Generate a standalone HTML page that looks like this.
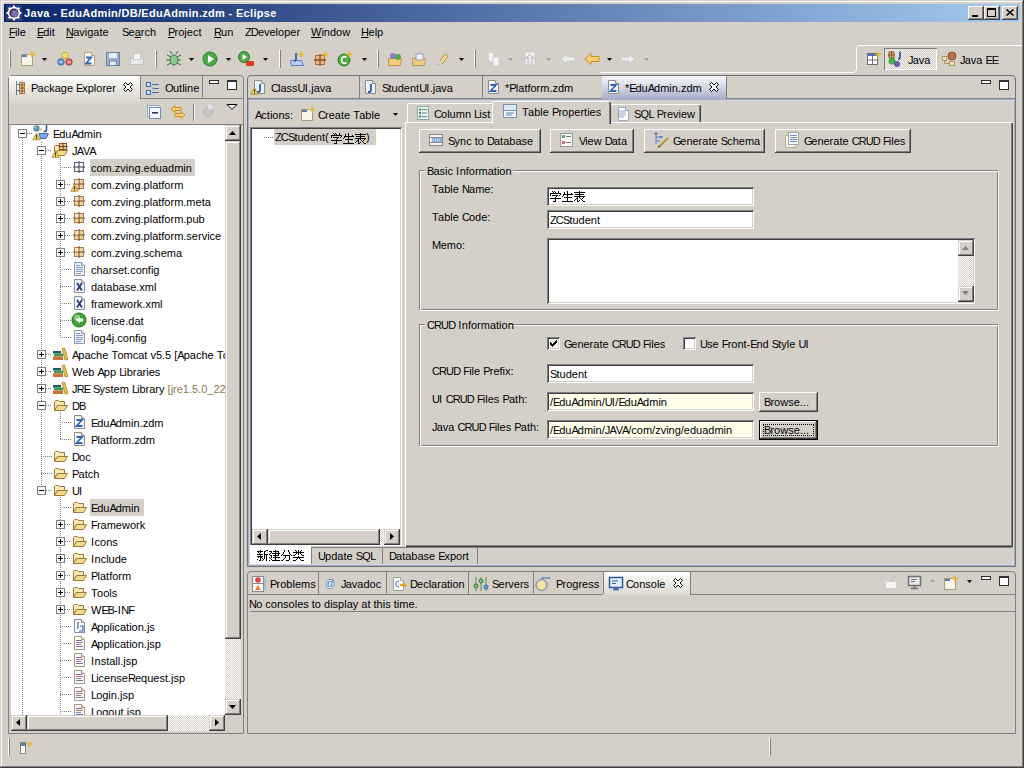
<!DOCTYPE html><html><head><meta charset="utf-8"><style>
html,body{margin:0;padding:0;width:1024px;height:768px;overflow:hidden;}
body{position:relative;font-family:"Liberation Sans",sans-serif;font-size:11px;color:#000;}
.t{position:absolute;white-space:nowrap;font-size:11px;line-height:13px;font-family:"Liberation Sans",sans-serif;}
svg{overflow:visible}
i{font-style:normal}.km13{letter-spacing:-1.3px}.km12{letter-spacing:-1.2px}.km10{letter-spacing:-1.0px}.km9{letter-spacing:-0.9px}.km8{letter-spacing:-0.8px}.km7{letter-spacing:-0.7px}.km6{letter-spacing:-0.6px}.km5{letter-spacing:-0.5px}.km4{letter-spacing:-0.4px}.k5{letter-spacing:0.5px}
</style></head><body><div style="position:absolute;left:0px;top:0px;width:1024px;height:768px;background:#D4D0C8"></div><div style="position:absolute;left:1px;top:1px;width:1021px;height:1px;background:#FFFFFF"></div><div style="position:absolute;left:1px;top:1px;width:1px;height:765px;background:#FFFFFF"></div><div style="position:absolute;left:1022px;top:1px;width:1px;height:765px;background:#808080"></div><div style="position:absolute;left:1px;top:766px;width:1022px;height:1px;background:#808080"></div><div style="position:absolute;left:1023px;top:0px;width:1px;height:768px;background:#404040"></div><div style="position:absolute;left:0px;top:767px;width:1024px;height:1px;background:#404040"></div><div style="position:absolute;left:4px;top:4px;width:1016px;height:18px;background:linear-gradient(to right,#0A246A,#A6CAF0)"></div><svg style="position:absolute;left:6px;top:5px" width="16" height="16" viewBox="0 0 16 16"><rect x="0" y="0" width="16" height="16" fill="#3A4488" opacity="0.7"/><g fill="#fff"><circle cx="8" cy="8" r="6.2"/><rect x="7" y="0.5" width="2" height="15"/><rect x="0.5" y="7" width="15" height="2"/><rect x="7" y="0.5" width="2" height="15" transform="rotate(45 8 8)"/><rect x="7" y="0.5" width="2" height="15" transform="rotate(-45 8 8)"/></g><circle cx="8" cy="8" r="4.6" fill="#2A2640"/><circle cx="8.5" cy="8.5" r="3.4" fill="#7A70A8"/></svg><div class="t" style="left:24px;top:7px;color:#fff;font-weight:bold;letter-spacing:0.32px;">Java - EduAdmin/DB/EduAdmin.zdm - Eclipse</div><div style="position:absolute;left:968px;top:6px;width:16px;height:14px;background:#D4D0C8;box-shadow:inset -1px -1px #404040,inset 1px 1px #FFFFFF,inset -2px -2px #808080;"></div><div style="position:absolute;left:972px;top:15px;width:6px;height:2px;background:#000"></div><div style="position:absolute;left:984px;top:6px;width:16px;height:14px;background:#D4D0C8;box-shadow:inset -1px -1px #404040,inset 1px 1px #FFFFFF,inset -2px -2px #808080;"></div><div style="position:absolute;left:987px;top:8px;width:9px;height:9px;border:1px solid #000;border-top-width:2px;box-sizing:border-box"></div><div style="position:absolute;left:1002px;top:6px;width:16px;height:14px;background:#D4D0C8;box-shadow:inset -1px -1px #404040,inset 1px 1px #FFFFFF,inset -2px -2px #808080;"></div><svg style="position:absolute;left:1006px;top:9px" width="8" height="7"><path d="M0.5 0.5 L7.5 6.5 M7.5 0.5 L0.5 6.5" stroke="#000" stroke-width="1.6"/></svg><div class="t" style="left:9px;top:26px;"><u><i class="km8">F</i></u>ile</div><div class="t" style="left:37px;top:26px;"><u><i class="km12">E</i></u>dit</div><div class="t" style="left:66px;top:26px;"><u><i class="km8">N</i></u>avigate</div><div class="t" style="left:122px;top:26px;"><i class="km8">S</i>e<u>a</u>rch</div><div class="t" style="left:168px;top:26px;"><u><i class="km8">P</i></u>roject</div><div class="t" style="left:214px;top:26px;"><u><i class="km9">R</i></u>un</div><div class="t" style="left:245px;top:26px;"><i class="km9">Z</i><i class="km9">D</i>eveloper</div><div class="t" style="left:311px;top:26px;"><u>W</u>indow</div><div class="t" style="left:361px;top:26px;"><u><i class="km4">H</i></u>elp</div><div style="position:absolute;left:9px;top:50px;width:1px;height:18px;background:#FFFFFF"></div><div style="position:absolute;left:10px;top:50px;width:1px;height:18px;background:#808080"></div><svg style="position:absolute;left:20px;top:51px" width="16" height="16" viewBox="0 0 16 16" ><rect x="1.5" y="3.5" width="11" height="11" fill="#F8F6EA" stroke="#A89C70"/><rect x="2" y="4" width="5" height="2" fill="#5A7EC0"/><path d="M12 0.5 V6.5 M9 3.5 H15" stroke="#E8B820" stroke-width="1.5"/></svg><svg style="position:absolute;left:42px;top:58px" width="5" height="3"><path d="M0 0 H5 L2.5 3 Z" fill="#000"/></svg><svg style="position:absolute;left:57px;top:51px" width="16" height="16" viewBox="0 0 16 16" ><circle cx="8" cy="4.5" r="3.2" fill="#F4E36A" stroke="#B8A840"/><circle cx="4" cy="11" r="3.2" fill="#6A9AD8" stroke="#3A6AB0"/><circle cx="12" cy="11" r="3.2" fill="#E86A6A" stroke="#B03A3A"/><rect x="2.5" y="10.5" width="3" height="1" fill="#fff"/><rect x="10.5" y="10.5" width="3" height="1" fill="#fff"/></svg><svg style="position:absolute;left:81px;top:51px" width="16" height="16" viewBox="0 0 16 16" ><path d="M3.5 1.5 H10.5 L13.5 4.5 V14.5 H3.5 Z" fill="#F6F9FC" stroke="#B8A070"/><path d="M10.5 1.5 V4.5 H13.5" fill="#E8E8E8" stroke="#B8A070"/><path d="M5 6.5 H10 L5 12.5 H10.5" stroke="#2F66B8" stroke-width="1.8" fill="none"/></svg><svg style="position:absolute;left:105px;top:51px" width="16" height="16" viewBox="0 0 16 16" ><rect x="1.5" y="1.5" width="13" height="13" fill="#9AB0D0" stroke="#6A80A8"/><rect x="4" y="2" width="8" height="5" fill="#E8EEF8"/><rect x="4.5" y="10" width="7" height="4.5" fill="#E8EEF8" stroke="#6A80A8"/></svg><svg style="position:absolute;left:129px;top:51px" width="16" height="16" viewBox="0 0 16 16" ><rect x="1.5" y="7.5" width="13" height="6" fill="#E8E8E8" stroke="#C0C0C0"/><rect x="4.5" y="2.5" width="7" height="6" fill="#F4F4F4" stroke="#C8C8C8"/></svg><div style="position:absolute;left:155px;top:50px;width:1px;height:18px;background:#FFFFFF"></div><div style="position:absolute;left:156px;top:50px;width:1px;height:18px;background:#808080"></div><svg style="position:absolute;left:165px;top:51px" width="16" height="16" viewBox="0 0 16 16" ><ellipse cx="9" cy="9" rx="4" ry="5" fill="#8CC890" stroke="#3C7A40"/><path d="M2 4 L6 6 M1 9 H5 M2 14 L6 12 M16 4 L12 6 M16 9 H13 M16 14 L12 12 M7 3 L5 0 M11 3 L13 0" stroke="#3C6A40" stroke-width="1"/></svg><svg style="position:absolute;left:189px;top:58px" width="5" height="3"><path d="M0 0 H5 L2.5 3 Z" fill="#000"/></svg><svg style="position:absolute;left:202px;top:51px" width="16" height="16" viewBox="0 0 16 16" ><circle cx="8" cy="8" r="7" fill="#4CAA48" stroke="#2C7A28"/><path d="M6 4 L12 8 L6 12 Z" fill="#fff"/></svg><svg style="position:absolute;left:226px;top:58px" width="5" height="3"><path d="M0 0 H5 L2.5 3 Z" fill="#000"/></svg><svg style="position:absolute;left:238px;top:51px" width="16" height="16" viewBox="0 0 16 16" ><circle cx="6" cy="6" r="5.5" fill="#4CAA48" stroke="#2C7A28"/><path d="M4.5 3 L9 6 L4.5 9 Z" fill="#fff"/><rect x="8" y="10" width="8" height="5" rx="1" fill="#D83A2A"/></svg><svg style="position:absolute;left:263px;top:58px" width="5" height="3"><path d="M0 0 H5 L2.5 3 Z" fill="#000"/></svg><div style="position:absolute;left:279px;top:50px;width:1px;height:18px;background:#FFFFFF"></div><div style="position:absolute;left:280px;top:50px;width:1px;height:18px;background:#808080"></div><svg style="position:absolute;left:289px;top:51px" width="16" height="16" viewBox="0 0 16 16" ><path d="M1.5 9.5 H12.5 L14.5 14.5 H2.5 Z" fill="#B8D0F0" stroke="#5A7EC0"/><path d="M7 2 V8 Q7 10 5 10" stroke="#2F5CAA" stroke-width="1.8" fill="none"/><path d="M12 0.5 V6.5 M9 3.5 H15" stroke="#E8B820" stroke-width="1.5"/></svg><svg style="position:absolute;left:313px;top:51px" width="16" height="16" viewBox="0 0 16 16" ><rect x="2.5" y="4.5" width="9" height="9" fill="#E9B98A" stroke="#A86B3A"/><path d="M7 3 V15 M1 9 H13" stroke="#8C4E22" stroke-width="1.3"/><path d="M12 0.5 V6.5 M9 3.5 H15" stroke="#E8B820" stroke-width="1.5"/></svg><svg style="position:absolute;left:337px;top:51px" width="16" height="16" viewBox="0 0 16 16" ><circle cx="7" cy="9" r="6" fill="#4CAA48" stroke="#2C7A28"/><path d="M9.5 6.5 Q7 4.5 5 7 Q4 9 5 11 Q7 13.5 9.5 11.5" stroke="#fff" stroke-width="1.8" fill="none"/><path d="M12 0.5 V6.5 M9 3.5 H15" stroke="#E8B820" stroke-width="1.5"/></svg><svg style="position:absolute;left:362px;top:58px" width="5" height="3"><path d="M0 0 H5 L2.5 3 Z" fill="#000"/></svg><div style="position:absolute;left:377px;top:50px;width:1px;height:18px;background:#FFFFFF"></div><div style="position:absolute;left:378px;top:50px;width:1px;height:18px;background:#808080"></div><svg style="position:absolute;left:387px;top:51px" width="16" height="16" viewBox="0 0 16 16" ><path d="M1.5 7.5 H14.5 L13.5 14.5 H1.5 Z" fill="#F2CC78" stroke="#B8965A"/><circle cx="6" cy="5" r="3" fill="#8A7AC8"/><circle cx="11" cy="6" r="3" fill="#4CAA48"/></svg><svg style="position:absolute;left:411px;top:51px" width="16" height="16" viewBox="0 0 16 16" ><path d="M1.5 7.5 H14.5 L13.5 14.5 H1.5 Z" fill="#F2CC78" stroke="#B8965A"/><rect x="5" y="3" width="7" height="6" fill="#F4F4F4" stroke="#8AA0C0"/></svg><svg style="position:absolute;left:435px;top:51px" width="16" height="16" viewBox="0 0 16 16" ><path d="M2 14 L5 10 L10 3 L13 5 L8 12 Z" fill="#F0D890" stroke="#B89850"/><path d="M2 14 L5 10 L7 12 Z" fill="#fff" stroke="#C0C0C0"/></svg><svg style="position:absolute;left:459px;top:58px" width="5" height="3"><path d="M0 0 H5 L2.5 3 Z" fill="#000"/></svg><div style="position:absolute;left:474px;top:50px;width:1px;height:18px;background:#FFFFFF"></div><div style="position:absolute;left:475px;top:50px;width:1px;height:18px;background:#808080"></div><svg style="position:absolute;left:485px;top:51px" width="16" height="16" viewBox="0 0 16 16" ><path d="M3 2 V9 L6 12 L9 9 V2" fill="#F0F0F0" stroke="#C0C0C0"/><rect x="8" y="6" width="6" height="9" fill="#F4F4F4" stroke="#D0D0D0"/></svg><svg style="position:absolute;left:508px;top:58px" width="5" height="3"><path d="M0 0 H5 L2.5 3 Z" fill="#A0A0A0"/></svg><svg style="position:absolute;left:522px;top:51px" width="16" height="16" viewBox="0 0 16 16" ><rect x="3" y="1" width="10" height="13" fill="#F4F4F4" stroke="#C8C8C8"/><path d="M6 14 V6 L3 8 L8 3 L13 8 L10 6 V14" fill="#E8E8E8" stroke="#B8B8B8"/></svg><svg style="position:absolute;left:546px;top:58px" width="5" height="3"><path d="M0 0 H5 L2.5 3 Z" fill="#A0A0A0"/></svg><svg style="position:absolute;left:560px;top:51px" width="16" height="16" viewBox="0 0 16 16" ><path d="M1 8 L7 3 V6 H15 V10 H7 V13 Z" fill="#ECECEC" stroke="#C8C8C8"/></svg><svg style="position:absolute;left:584px;top:51px" width="16" height="16" viewBox="0 0 16 16" ><path d="M1 8 L7 2.5 V5.5 H15 V10.5 H7 V13.5 Z" fill="#F8D070" stroke="#C89020"/></svg><svg style="position:absolute;left:607px;top:58px" width="5" height="3"><path d="M0 0 H5 L2.5 3 Z" fill="#000"/></svg><svg style="position:absolute;left:620px;top:51px" width="16" height="16" viewBox="0 0 16 16" ><path d="M15 8 L9 3 V6 H1 V10 H9 V13 Z" fill="#ECECEC" stroke="#C8C8C8"/></svg><svg style="position:absolute;left:644px;top:58px" width="5" height="3"><path d="M0 0 H5 L2.5 3 Z" fill="#A0A0A0"/></svg><svg style="position:absolute;left:600px;top:44px" width="422" height="30"><path d="M0 28.5 H253 Q256.5 28.5 256.5 25 V5 Q256.5 1.5 260 1.5 H422" fill="none" stroke="#fff"/></svg><svg style="position:absolute;left:866px;top:51px" width="16" height="16" viewBox="0 0 16 16" ><rect x="1.5" y="2.5" width="10" height="11" fill="#fff" stroke="#707070"/><rect x="2" y="3" width="9" height="2" fill="#4A70C0"/><path d="M6.5 5 V13.5 M1.5 9 H11.5" stroke="#707070"/><path d="M12 0.5 V6.5 M9 3.5 H15" stroke="#E8B820" stroke-width="1.5"/></svg><div style="position:absolute;left:884px;top:48px;width:53px;height:22px;box-shadow:inset 1px 1px #808080,inset -1px -1px #fff;background-color:#E4E2DC;background-image:repeating-conic-gradient(#D4D0C8 0 25%,#F0EFEA 0 50%);background-size:2px 2px;"></div><svg style="position:absolute;left:887px;top:51px" width="16" height="16" viewBox="0 0 16 16" ><path d="M2 1 H7 V7 H2 Z M4.5 0 V8 M1 4 H8" stroke="#8C4E22" fill="#E9B98A"/><path d="M13 0.5 V6 Q13 8 11 8" stroke="#2F5CAA" stroke-width="1.8" fill="none"/><circle cx="5" cy="10" r="3.5" fill="#4CAA48"/><circle cx="10" cy="13" r="3" fill="#6A5AB0"/></svg><div class="t" style="left:908px;top:54px;"><i class="km8">J</i>ava</div><svg style="position:absolute;left:941px;top:51px" width="16" height="16" viewBox="0 0 16 16" ><circle cx="11" cy="5" r="4" fill="#C0704A" stroke="#8A4A2A"/><rect x="1.5" y="5.5" width="4" height="4" fill="#F4E8A8" stroke="#A89860"/><rect x="8.5" y="10.5" width="5" height="4" fill="#F4E8A8" stroke="#A89860"/><path d="M3.5 9.5 V12.5 H8.5" stroke="#A89860" fill="none"/></svg><div class="t" style="left:960px;top:54px;"><i class="km8">J</i>ava <i class="km12">E</i><i class="km12">E</i></div><div style="position:absolute;left:8px;top:75px;width:236px;height:659px;border:1px solid #808080;box-sizing:border-box;border-radius:4px 4px 0 0;background:#D4D0C8"></div><div style="position:absolute;left:9px;top:76px;width:131px;height:48px;background:linear-gradient(#FFFFFF 0px,#F4F3F0 6px,#D4D0C8 30px)"></div><div style="position:absolute;left:140px;top:76px;width:1px;height:23px;background:#808080"></div><div style="position:absolute;left:140px;top:98px;width:103px;height:1px;background:#808080"></div><div style="position:absolute;left:202px;top:76px;width:1px;height:22px;background:#808080"></div><svg style="position:absolute;left:14px;top:80px" width="16" height="16" viewBox="0 0 16 16" ><path d="M2.5 1 V15" stroke="#5A7EB8"/><path d="M2.5 4.5 H5 M2.5 10.5 H5" stroke="#5A7EB8"/><rect x="5.5" y="2.5" width="5" height="5" fill="#F0D0A0" stroke="#B08040"/><path d="M8 2 V8 M5 5 H11" stroke="#8A5A28"/><rect x="5.5" y="8.5" width="5" height="5" fill="#F0D0A0" stroke="#B08040"/><path d="M8 8 V14 M5 11 H11" stroke="#8A5A28"/></svg><div class="t" style="left:31px;top:82px;"><i class="km8">P</i>ackage <i class="km12">E</i>xplorer</div><svg style="position:absolute;left:123px;top:82px" width="10" height="10" viewBox="0 0 10 10"><path d="M0.5 2.5 L2.5 0.5 L5 3 L7.5 0.5 L9.5 2.5 L7 5 L9.5 7.5 L7.5 9.5 L5 7 L2.5 9.5 L0.5 7.5 L3 5 Z" fill="#fff" stroke="#000"/></svg><svg style="position:absolute;left:145px;top:81px" width="16" height="16" viewBox="0 0 16 16" ><rect x="1.5" y="1.5" width="4" height="4" fill="#C8E4F8" stroke="#3A70B0"/><rect x="1.5" y="9.5" width="4" height="4" fill="#C8E4F8" stroke="#3A70B0"/><path d="M7 3.5 H14 M9 7.5 H14 M7 11.5 H14" stroke="#3A70B0"/><rect x="7.5" y="6.5" width="1" height="2" fill="#3A70B0"/></svg><div class="t" style="left:165px;top:82px;"><i class="km6">O</i>utline</div><div style="position:absolute;left:209px;top:80px;width:10px;height:4px;border:1px solid #303030;background:#fff;box-sizing:border-box"></div><div style="position:absolute;left:227px;top:80px;width:10px;height:10px;border:1px solid #303030;border-top-width:2px;background:#fff;box-sizing:border-box"></div><svg style="position:absolute;left:146px;top:104px" width="16" height="16" viewBox="0 0 16 16" ><rect x="1.5" y="1.5" width="11" height="11" fill="#E8F0F8" stroke="#9AB0C8"/><rect x="3.5" y="3.5" width="11" height="11" fill="#F4F8FC" stroke="#7890B0"/><rect x="6" y="8" width="6" height="1.6" fill="#203858"/></svg><svg style="position:absolute;left:170px;top:104px" width="16" height="16" viewBox="0 0 16 16" ><path d="M1 5 L5 1.5 V3.5 H11 V6.5 H5 V8.5 Z" fill="#F8D070" stroke="#C89020"/><path d="M15 11 L11 7.5 V9.5 H5 V12.5 H11 V14.5 Z" fill="#F8D070" stroke="#C89020"/></svg><div style="position:absolute;left:193px;top:104px;width:1px;height:17px;background:#808080"></div><div style="position:absolute;left:194px;top:104px;width:1px;height:17px;background:#FFFFFF"></div><svg style="position:absolute;left:201px;top:103px" width="16" height="16" viewBox="0 0 16 16" ><circle cx="7" cy="9" r="4.5" fill="#C8C8C8" stroke="#B0B0B0"/><circle cx="9" cy="4" r="2.5" fill="#E0E0E0"/></svg><svg style="position:absolute;left:226px;top:104px" width="12" height="7"><path d="M1 0.5 H11 L6 5.5 Z" fill="#fff" stroke="#000"/></svg><div style="position:absolute;left:9px;top:124px;width:234px;height:1px;background:#808080"></div><div style="position:absolute;left:11px;top:125px;width:214px;height:590px;background:#fff"></div><div style="position:absolute;left:225px;top:125px;width:16px;height:590px;background-color:#fff;background-image:repeating-conic-gradient(#D4D0C8 0 25%,#fff 0 50%);background-size:2px 2px;"></div><div style="position:absolute;left:225px;top:125px;width:16px;height:16px;background:#D4D0C8;box-shadow:inset -1px -1px #404040,inset 1px 1px #D4D0C8,inset -2px -2px #808080,inset 2px 2px #FFFFFF;"></div><svg style="position:absolute;left:229px;top:131px" width="7" height="4"><path d="M0 4 H7 L3.5 0 Z" fill="#000"/></svg><div style="position:absolute;left:225px;top:141px;width:16px;height:498px;background:#D4D0C8;box-shadow:inset -1px -1px #404040,inset 1px 1px #D4D0C8,inset -2px -2px #808080,inset 2px 2px #FFFFFF;"></div><div style="position:absolute;left:225px;top:699px;width:16px;height:16px;background:#D4D0C8;box-shadow:inset -1px -1px #404040,inset 1px 1px #D4D0C8,inset -2px -2px #808080,inset 2px 2px #FFFFFF;"></div><svg style="position:absolute;left:229px;top:705px" width="7" height="4"><path d="M0 0 H7 L3.5 4 Z" fill="#000"/></svg><div style="position:absolute;left:11px;top:715px;width:214px;height:16px;background-color:#fff;background-image:repeating-conic-gradient(#D4D0C8 0 25%,#fff 0 50%);background-size:2px 2px;"></div><div style="position:absolute;left:11px;top:715px;width:16px;height:16px;background:#D4D0C8;box-shadow:inset -1px -1px #404040,inset 1px 1px #D4D0C8,inset -2px -2px #808080,inset 2px 2px #FFFFFF;"></div><svg style="position:absolute;left:16px;top:719px" width="4" height="7"><path d="M4 0 V7 L0 3.5 Z" fill="#000"/></svg><div style="position:absolute;left:27px;top:715px;width:141px;height:16px;background:#D4D0C8;box-shadow:inset -1px -1px #404040,inset 1px 1px #D4D0C8,inset -2px -2px #808080,inset 2px 2px #FFFFFF;"></div><div style="position:absolute;left:209px;top:715px;width:16px;height:16px;background:#D4D0C8;box-shadow:inset -1px -1px #404040,inset 1px 1px #D4D0C8,inset -2px -2px #808080,inset 2px 2px #FFFFFF;"></div><svg style="position:absolute;left:215px;top:719px" width="4" height="7"><path d="M0 0 V7 L4 3.5 Z" fill="#000"/></svg><div style="position:absolute;left:225px;top:715px;width:16px;height:16px;background:#D4D0C8"></div><div style="position:absolute;left:11px;top:125px;width:214px;height:590px;overflow:hidden"><div style="position:absolute;left:-11px;top:-125px;width:300px;height:800px"><div style="position:absolute;left:22px;top:138px;width:1px;height:577px;background:repeating-linear-gradient(to bottom,#808080 0 1px,transparent 1px 2px)"></div><div style="position:absolute;left:41px;top:142px;width:1px;height:349px;background:repeating-linear-gradient(to bottom,#808080 0 1px,transparent 1px 2px)"></div><div style="position:absolute;left:60px;top:155px;width:1px;height:183px;background:repeating-linear-gradient(to bottom,#808080 0 1px,transparent 1px 2px)"></div><div style="position:absolute;left:60px;top:410px;width:1px;height:30px;background:repeating-linear-gradient(to bottom,#808080 0 1px,transparent 1px 2px)"></div><div style="position:absolute;left:60px;top:495px;width:1px;height:220px;background:repeating-linear-gradient(to bottom,#808080 0 1px,transparent 1px 2px)"></div><div style="position:absolute;left:27px;top:133px;width:6px;height:1px;background:repeating-linear-gradient(to right,#808080 0 1px,transparent 1px 2px)"></div><div style="position:absolute;left:18px;top:129px;width:9px;height:9px;border:1px solid #808080;box-sizing:border-box;background:#fff"></div><div style="position:absolute;left:20px;top:133px;width:5px;height:1px;background:#000"></div><svg style="position:absolute;left:33px;top:125px" width="16" height="16" viewBox="0 0 16 16" ><circle cx="3.5" cy="3.5" r="3.2" fill="#5A8AB8"/><path d="M1 2.5 Q3 1 4.5 3 Q3.5 5 5.5 6" fill="#5AA060"/><circle cx="2.5" cy="2.5" r="1" fill="#C8E0F0" opacity="0.8"/><circle cx="8" cy="4.5" r="0.9" fill="#E89030"/><path d="M13.5 0 V5 Q13.5 6.5 11.5 6.5 H10.5" stroke="#2F4C8A" stroke-width="1.5" fill="none"/><path d="M6 8.5 H15.5 L13 13.5 H7.5 Z" fill="#7AA8E8" stroke="#3A5A9A" stroke-width="0.9"/><path d="M3.5 8 L7.2 14.8 H-0.2 Z" fill="#F2D060" stroke="#A88A30" stroke-width="0.8"/><rect x="3" y="10" width="1" height="2.6" fill="#202020"/><rect x="3" y="13.2" width="1" height="1" fill="#202020"/></svg><div class="t" style="left:53px;top:128px"><i class="km12">E</i>du<i class="km10">A</i>dmin</div><div style="position:absolute;left:46px;top:150px;width:6px;height:1px;background:repeating-linear-gradient(to right,#808080 0 1px,transparent 1px 2px)"></div><div style="position:absolute;left:37px;top:146px;width:9px;height:9px;border:1px solid #808080;box-sizing:border-box;background:#fff"></div><div style="position:absolute;left:39px;top:150px;width:5px;height:1px;background:#000"></div><svg style="position:absolute;left:52px;top:142px" width="16" height="16" viewBox="0 0 16 16" ><path d="M2.5 13.5 V4.5 L3.5 3.5 H6.5 L7.5 4.5 H12.5 V8.5 H5.5 Z" fill="#FAE8B4" stroke="#9A7A38"/><rect x="7.5" y="1.5" width="7" height="6" fill="#F0CFA0" stroke="#8A5A28"/><path d="M11 0.5 V8.5 M6.5 4.5 H15.5" stroke="#6A3A10"/><path d="M2.5 13.5 L5.5 8.5 H15.5 L12.5 13.5 Z" fill="#F6D98A" stroke="#9A7A38"/><path d="M3.5 8.5 L7.2 15.3 H-0.2 Z" fill="#F2D060" stroke="#A88A30" stroke-width="0.8"/><rect x="3" y="10.5" width="1" height="2.6" fill="#202020"/><rect x="3" y="13.7" width="1" height="1" fill="#202020"/></svg><div class="t" style="left:72px;top:145px"><i class="km8">J</i><i class="km10">A</i><i class="km12">V</i><i class="km10">A</i></div><div style="position:absolute;left:60px;top:167px;width:11px;height:1px;background:repeating-linear-gradient(to right,#808080 0 1px,transparent 1px 2px)"></div><div style="position:absolute;left:90px;top:159px;width:105px;height:17px;background:#D4D0C8"></div><svg style="position:absolute;left:71px;top:159px" width="16" height="16" viewBox="0 0 16 16" ><rect x="3.5" y="3.5" width="9" height="9" fill="#F4F4F8" stroke="#606070"/><path d="M8 2 V14 M2 8 H14" stroke="#404050" stroke-width="1"/></svg><div class="t" style="left:91px;top:162px">com.zving.eduadmin</div><div style="position:absolute;left:65px;top:184px;width:6px;height:1px;background:repeating-linear-gradient(to right,#808080 0 1px,transparent 1px 2px)"></div><div style="position:absolute;left:56px;top:180px;width:9px;height:9px;border:1px solid #808080;box-sizing:border-box;background:#fff"></div><div style="position:absolute;left:58px;top:184px;width:5px;height:1px;background:#000"></div><div style="position:absolute;left:60px;top:182px;width:1px;height:5px;background:#000"></div><svg style="position:absolute;left:71px;top:176px" width="16" height="16" viewBox="0 0 16 16" ><rect x="3.5" y="3.5" width="9" height="9" fill="#F0CFA0" stroke="#A8804A"/><path d="M8 2 V14 M2 8 H14" stroke="#7A4A20" stroke-width="1"/><rect x="4" y="4" width="3.5" height="3.5" fill="#F8E4C8"/><path d="M3.5 8.5 L7.2 15.3 H-0.2 Z" fill="#F2D060" stroke="#A88A30" stroke-width="0.8"/><rect x="3" y="10.5" width="1" height="2.6" fill="#202020"/><rect x="3" y="13.7" width="1" height="1" fill="#202020"/></svg><div class="t" style="left:91px;top:179px">com.zving.platform</div><div style="position:absolute;left:65px;top:201px;width:6px;height:1px;background:repeating-linear-gradient(to right,#808080 0 1px,transparent 1px 2px)"></div><div style="position:absolute;left:56px;top:197px;width:9px;height:9px;border:1px solid #808080;box-sizing:border-box;background:#fff"></div><div style="position:absolute;left:58px;top:201px;width:5px;height:1px;background:#000"></div><div style="position:absolute;left:60px;top:199px;width:1px;height:5px;background:#000"></div><svg style="position:absolute;left:71px;top:193px" width="16" height="16" viewBox="0 0 16 16" ><rect x="3.5" y="3.5" width="9" height="9" fill="#F0CFA0" stroke="#A8804A"/><path d="M8 2 V14 M2 8 H14" stroke="#7A4A20" stroke-width="1"/><rect x="4" y="4" width="3.5" height="3.5" fill="#F8E4C8"/></svg><div class="t" style="left:91px;top:196px">com.zving.platform.meta</div><div style="position:absolute;left:65px;top:218px;width:6px;height:1px;background:repeating-linear-gradient(to right,#808080 0 1px,transparent 1px 2px)"></div><div style="position:absolute;left:56px;top:214px;width:9px;height:9px;border:1px solid #808080;box-sizing:border-box;background:#fff"></div><div style="position:absolute;left:58px;top:218px;width:5px;height:1px;background:#000"></div><div style="position:absolute;left:60px;top:216px;width:1px;height:5px;background:#000"></div><svg style="position:absolute;left:71px;top:210px" width="16" height="16" viewBox="0 0 16 16" ><rect x="3.5" y="3.5" width="9" height="9" fill="#F0CFA0" stroke="#A8804A"/><path d="M8 2 V14 M2 8 H14" stroke="#7A4A20" stroke-width="1"/><rect x="4" y="4" width="3.5" height="3.5" fill="#F8E4C8"/></svg><div class="t" style="left:91px;top:213px">com.zving.platform.pub</div><div style="position:absolute;left:65px;top:235px;width:6px;height:1px;background:repeating-linear-gradient(to right,#808080 0 1px,transparent 1px 2px)"></div><div style="position:absolute;left:56px;top:231px;width:9px;height:9px;border:1px solid #808080;box-sizing:border-box;background:#fff"></div><div style="position:absolute;left:58px;top:235px;width:5px;height:1px;background:#000"></div><div style="position:absolute;left:60px;top:233px;width:1px;height:5px;background:#000"></div><svg style="position:absolute;left:71px;top:227px" width="16" height="16" viewBox="0 0 16 16" ><rect x="3.5" y="3.5" width="9" height="9" fill="#F0CFA0" stroke="#A8804A"/><path d="M8 2 V14 M2 8 H14" stroke="#7A4A20" stroke-width="1"/><rect x="4" y="4" width="3.5" height="3.5" fill="#F8E4C8"/></svg><div class="t" style="left:91px;top:230px">com.zving.platform.service</div><div style="position:absolute;left:65px;top:252px;width:6px;height:1px;background:repeating-linear-gradient(to right,#808080 0 1px,transparent 1px 2px)"></div><div style="position:absolute;left:56px;top:248px;width:9px;height:9px;border:1px solid #808080;box-sizing:border-box;background:#fff"></div><div style="position:absolute;left:58px;top:252px;width:5px;height:1px;background:#000"></div><div style="position:absolute;left:60px;top:250px;width:1px;height:5px;background:#000"></div><svg style="position:absolute;left:71px;top:244px" width="16" height="16" viewBox="0 0 16 16" ><rect x="3.5" y="3.5" width="9" height="9" fill="#F0CFA0" stroke="#A8804A"/><path d="M8 2 V14 M2 8 H14" stroke="#7A4A20" stroke-width="1"/><rect x="4" y="4" width="3.5" height="3.5" fill="#F8E4C8"/></svg><div class="t" style="left:91px;top:247px">com.zving.schema</div><div style="position:absolute;left:60px;top:269px;width:11px;height:1px;background:repeating-linear-gradient(to right,#808080 0 1px,transparent 1px 2px)"></div><svg style="position:absolute;left:71px;top:261px" width="16" height="16" viewBox="0 0 16 16" ><path d="M3.5 1.5 H10.5 L13.5 4.5 V14.5 H3.5 Z" fill="#F2F5FB" stroke="#8C93A8"/><path d="M10.5 1.5 V4.5 H13.5" fill="#E8E8E8" stroke="#8C93A8"/><rect x="5" y="4" width="4" height="1" fill="#7F98C8"/><rect x="5" y="6" width="7" height="1" fill="#7F98C8"/><rect x="5" y="8" width="7" height="1" fill="#7F98C8"/><rect x="5" y="10" width="7" height="1" fill="#7F98C8"/><rect x="5" y="12" width="5" height="1" fill="#7F98C8"/></svg><div class="t" style="left:91px;top:264px">charset.config</div><div style="position:absolute;left:60px;top:286px;width:11px;height:1px;background:repeating-linear-gradient(to right,#808080 0 1px,transparent 1px 2px)"></div><svg style="position:absolute;left:71px;top:278px" width="16" height="16" viewBox="0 0 16 16" ><path d="M3.5 1.5 H10.5 L13.5 4.5 V14.5 H3.5 Z" fill="#F2F5FB" stroke="#8C93A8"/><path d="M10.5 1.5 V4.5 H13.5" fill="#E8E8E8" stroke="#8C93A8"/><path d="M6 5 L11 12.5 M11 5 L6 12.5" stroke="#2A3C78" stroke-width="1.8"/></svg><div class="t" style="left:91px;top:281px">database.xml</div><div style="position:absolute;left:60px;top:303px;width:11px;height:1px;background:repeating-linear-gradient(to right,#808080 0 1px,transparent 1px 2px)"></div><svg style="position:absolute;left:71px;top:295px" width="16" height="16" viewBox="0 0 16 16" ><path d="M3.5 1.5 H10.5 L13.5 4.5 V14.5 H3.5 Z" fill="#F2F5FB" stroke="#8C93A8"/><path d="M10.5 1.5 V4.5 H13.5" fill="#E8E8E8" stroke="#8C93A8"/><path d="M6 5 L11 12.5 M11 5 L6 12.5" stroke="#2A3C78" stroke-width="1.8"/></svg><div class="t" style="left:91px;top:298px">framework.xml</div><div style="position:absolute;left:60px;top:320px;width:11px;height:1px;background:repeating-linear-gradient(to right,#808080 0 1px,transparent 1px 2px)"></div><svg style="position:absolute;left:71px;top:312px" width="16" height="16" viewBox="0 0 16 16" ><circle cx="8" cy="8" r="7" fill="#3FA33A" stroke="#1F6E1A"/><circle cx="6" cy="5.5" r="3" fill="#9EDB8E" opacity="0.8"/><path d="M4.5 8 L9 5 V11 Z" fill="#FFFFFF"/><rect x="8" y="6.5" width="4" height="3" fill="#fff"/></svg><div class="t" style="left:91px;top:315px">license.dat</div><div style="position:absolute;left:60px;top:337px;width:11px;height:1px;background:repeating-linear-gradient(to right,#808080 0 1px,transparent 1px 2px)"></div><svg style="position:absolute;left:71px;top:329px" width="16" height="16" viewBox="0 0 16 16" ><path d="M3.5 1.5 H10.5 L13.5 4.5 V14.5 H3.5 Z" fill="#F2F5FB" stroke="#8C93A8"/><path d="M10.5 1.5 V4.5 H13.5" fill="#E8E8E8" stroke="#8C93A8"/><rect x="5" y="4" width="4" height="1" fill="#7F98C8"/><rect x="5" y="6" width="7" height="1" fill="#7F98C8"/><rect x="5" y="8" width="7" height="1" fill="#7F98C8"/><rect x="5" y="10" width="7" height="1" fill="#7F98C8"/><rect x="5" y="12" width="5" height="1" fill="#7F98C8"/></svg><div class="t" style="left:91px;top:332px">log4j.config</div><div style="position:absolute;left:46px;top:354px;width:6px;height:1px;background:repeating-linear-gradient(to right,#808080 0 1px,transparent 1px 2px)"></div><div style="position:absolute;left:37px;top:350px;width:9px;height:9px;border:1px solid #808080;box-sizing:border-box;background:#fff"></div><div style="position:absolute;left:39px;top:354px;width:5px;height:1px;background:#000"></div><div style="position:absolute;left:41px;top:352px;width:1px;height:5px;background:#000"></div><svg style="position:absolute;left:52px;top:346px" width="16" height="16" viewBox="0 0 16 16" ><rect x="1" y="5" width="8" height="2.5" fill="#1E5A72"/><rect x="2" y="7.5" width="9" height="3" fill="#3E9A4E"/><rect x="1" y="10.5" width="10" height="3.5" fill="#D2703E"/><path d="M10 2.5 L12.5 2 L16 13.5 L13 14 Z" fill="#E8C050" stroke="#B08828" stroke-width="0.8"/></svg><div class="t" style="left:72px;top:349px"><i class="km10">A</i>pache <i class="km7">T</i>omcat v5.5 [<i class="km10">A</i>pache <i class="km7">T</i>omcat v5.5]</div><div style="position:absolute;left:46px;top:371px;width:6px;height:1px;background:repeating-linear-gradient(to right,#808080 0 1px,transparent 1px 2px)"></div><div style="position:absolute;left:37px;top:367px;width:9px;height:9px;border:1px solid #808080;box-sizing:border-box;background:#fff"></div><div style="position:absolute;left:39px;top:371px;width:5px;height:1px;background:#000"></div><div style="position:absolute;left:41px;top:369px;width:1px;height:5px;background:#000"></div><svg style="position:absolute;left:52px;top:363px" width="16" height="16" viewBox="0 0 16 16" ><rect x="1" y="5" width="8" height="2.5" fill="#1E5A72"/><rect x="2" y="7.5" width="9" height="3" fill="#3E9A4E"/><rect x="1" y="10.5" width="10" height="3.5" fill="#D2703E"/><path d="M10 2.5 L12.5 2 L16 13.5 L13 14 Z" fill="#E8C050" stroke="#B08828" stroke-width="0.8"/></svg><div class="t" style="left:72px;top:366px">Web <i class="km10">A</i>pp <i class="km10">L</i>ibraries</div><div style="position:absolute;left:46px;top:388px;width:6px;height:1px;background:repeating-linear-gradient(to right,#808080 0 1px,transparent 1px 2px)"></div><div style="position:absolute;left:37px;top:384px;width:9px;height:9px;border:1px solid #808080;box-sizing:border-box;background:#fff"></div><div style="position:absolute;left:39px;top:388px;width:5px;height:1px;background:#000"></div><div style="position:absolute;left:41px;top:386px;width:1px;height:5px;background:#000"></div><svg style="position:absolute;left:52px;top:380px" width="16" height="16" viewBox="0 0 16 16" ><rect x="1" y="5" width="8" height="2.5" fill="#1E5A72"/><rect x="2" y="7.5" width="9" height="3" fill="#3E9A4E"/><rect x="1" y="10.5" width="10" height="3.5" fill="#D2703E"/><path d="M10 2.5 L12.5 2 L16 13.5 L13 14 Z" fill="#E8C050" stroke="#B08828" stroke-width="0.8"/></svg><div class="t" style="left:72px;top:383px"><i class="km8">J</i><i class="km9">R</i><i class="km12">E</i> <i class="km8">S</i>ystem <i class="km10">L</i>ibrary <span style="color:#8A7A50">[jre1.5.0_22]</span></div><div style="position:absolute;left:46px;top:405px;width:6px;height:1px;background:repeating-linear-gradient(to right,#808080 0 1px,transparent 1px 2px)"></div><div style="position:absolute;left:37px;top:401px;width:9px;height:9px;border:1px solid #808080;box-sizing:border-box;background:#fff"></div><div style="position:absolute;left:39px;top:405px;width:5px;height:1px;background:#000"></div><svg style="position:absolute;left:52px;top:397px" width="16" height="16" viewBox="0 0 16 16" ><path d="M2.5 13.5 V4.5 L3.5 3.5 H6.5 L7.5 4.5 H12.5 V8.5 H5.5 Z" fill="#FAE8B4" stroke="#9A7A38"/><path d="M2.5 13.5 L5.5 8.5 H15.5 L12.5 13.5 Z" fill="#F6D98A" stroke="#9A7A38"/></svg><div class="t" style="left:72px;top:400px"><i class="km9">D</i><i class="km9">B</i></div><div style="position:absolute;left:60px;top:422px;width:11px;height:1px;background:repeating-linear-gradient(to right,#808080 0 1px,transparent 1px 2px)"></div><svg style="position:absolute;left:71px;top:414px" width="16" height="16" viewBox="0 0 16 16" ><path d="M3.5 1.5 H10.5 L13.5 4.5 V14.5 H3.5 Z" fill="#F6F9FC" stroke="#8C8C8C"/><path d="M10.5 1.5 V4.5 H13.5" fill="#E8E8E8" stroke="#8C8C8C"/><path d="M5.5 6 H11 L5.5 12 H11.5" stroke="#2F66B8" stroke-width="1.8" fill="none"/></svg><div class="t" style="left:91px;top:417px"><i class="km12">E</i>du<i class="km10">A</i>dmin.zdm</div><div style="position:absolute;left:60px;top:439px;width:11px;height:1px;background:repeating-linear-gradient(to right,#808080 0 1px,transparent 1px 2px)"></div><svg style="position:absolute;left:71px;top:431px" width="16" height="16" viewBox="0 0 16 16" ><path d="M3.5 1.5 H10.5 L13.5 4.5 V14.5 H3.5 Z" fill="#F6F9FC" stroke="#8C8C8C"/><path d="M10.5 1.5 V4.5 H13.5" fill="#E8E8E8" stroke="#8C8C8C"/><path d="M5.5 6 H11 L5.5 12 H11.5" stroke="#2F66B8" stroke-width="1.8" fill="none"/></svg><div class="t" style="left:91px;top:434px"><i class="km8">P</i>latform.zdm</div><div style="position:absolute;left:41px;top:456px;width:11px;height:1px;background:repeating-linear-gradient(to right,#808080 0 1px,transparent 1px 2px)"></div><svg style="position:absolute;left:52px;top:448px" width="16" height="16" viewBox="0 0 16 16" ><path d="M2.5 13.5 V4.5 L3.5 3.5 H6.5 L7.5 4.5 H12.5 V8.5 H5.5 Z" fill="#FAE8B4" stroke="#9A7A38"/><path d="M2.5 13.5 L5.5 8.5 H15.5 L12.5 13.5 Z" fill="#F6D98A" stroke="#9A7A38"/></svg><div class="t" style="left:72px;top:451px"><i class="km9">D</i>oc</div><div style="position:absolute;left:41px;top:473px;width:11px;height:1px;background:repeating-linear-gradient(to right,#808080 0 1px,transparent 1px 2px)"></div><svg style="position:absolute;left:52px;top:465px" width="16" height="16" viewBox="0 0 16 16" ><path d="M2.5 13.5 V4.5 L3.5 3.5 H6.5 L7.5 4.5 H12.5 V8.5 H5.5 Z" fill="#FAE8B4" stroke="#9A7A38"/><path d="M2.5 13.5 L5.5 8.5 H15.5 L12.5 13.5 Z" fill="#F6D98A" stroke="#9A7A38"/></svg><div class="t" style="left:72px;top:468px"><i class="km8">P</i>atch</div><div style="position:absolute;left:46px;top:490px;width:6px;height:1px;background:repeating-linear-gradient(to right,#808080 0 1px,transparent 1px 2px)"></div><div style="position:absolute;left:37px;top:486px;width:9px;height:9px;border:1px solid #808080;box-sizing:border-box;background:#fff"></div><div style="position:absolute;left:39px;top:490px;width:5px;height:1px;background:#000"></div><svg style="position:absolute;left:52px;top:482px" width="16" height="16" viewBox="0 0 16 16" ><path d="M2.5 13.5 V4.5 L3.5 3.5 H6.5 L7.5 4.5 H12.5 V8.5 H5.5 Z" fill="#FAE8B4" stroke="#9A7A38"/><path d="M2.5 13.5 L5.5 8.5 H15.5 L12.5 13.5 Z" fill="#F6D98A" stroke="#9A7A38"/></svg><div class="t" style="left:72px;top:485px"><i class="km9">U</i><i class="k5">I</i></div><div style="position:absolute;left:60px;top:507px;width:11px;height:1px;background:repeating-linear-gradient(to right,#808080 0 1px,transparent 1px 2px)"></div><div style="position:absolute;left:90px;top:499px;width:54px;height:17px;background:#D4D0C8"></div><svg style="position:absolute;left:71px;top:499px" width="16" height="16" viewBox="0 0 16 16" ><path d="M2.5 13.5 V4.5 L3.5 3.5 H6.5 L7.5 4.5 H12.5 V8.5 H5.5 Z" fill="#FAE8B4" stroke="#9A7A38"/><path d="M2.5 13.5 L5.5 8.5 H15.5 L12.5 13.5 Z" fill="#F6D98A" stroke="#9A7A38"/></svg><div class="t" style="left:91px;top:502px"><i class="km12">E</i>du<i class="km10">A</i>dmin</div><div style="position:absolute;left:65px;top:524px;width:6px;height:1px;background:repeating-linear-gradient(to right,#808080 0 1px,transparent 1px 2px)"></div><div style="position:absolute;left:56px;top:520px;width:9px;height:9px;border:1px solid #808080;box-sizing:border-box;background:#fff"></div><div style="position:absolute;left:58px;top:524px;width:5px;height:1px;background:#000"></div><div style="position:absolute;left:60px;top:522px;width:1px;height:5px;background:#000"></div><svg style="position:absolute;left:71px;top:516px" width="16" height="16" viewBox="0 0 16 16" ><path d="M2.5 13.5 V4.5 L3.5 3.5 H6.5 L7.5 4.5 H12.5 V8.5 H5.5 Z" fill="#FAE8B4" stroke="#9A7A38"/><path d="M2.5 13.5 L5.5 8.5 H15.5 L12.5 13.5 Z" fill="#F6D98A" stroke="#9A7A38"/></svg><div class="t" style="left:91px;top:519px"><i class="km8">F</i>ramework</div><div style="position:absolute;left:65px;top:541px;width:6px;height:1px;background:repeating-linear-gradient(to right,#808080 0 1px,transparent 1px 2px)"></div><div style="position:absolute;left:56px;top:537px;width:9px;height:9px;border:1px solid #808080;box-sizing:border-box;background:#fff"></div><div style="position:absolute;left:58px;top:541px;width:5px;height:1px;background:#000"></div><div style="position:absolute;left:60px;top:539px;width:1px;height:5px;background:#000"></div><svg style="position:absolute;left:71px;top:533px" width="16" height="16" viewBox="0 0 16 16" ><path d="M2.5 13.5 V4.5 L3.5 3.5 H6.5 L7.5 4.5 H12.5 V8.5 H5.5 Z" fill="#FAE8B4" stroke="#9A7A38"/><path d="M2.5 13.5 L5.5 8.5 H15.5 L12.5 13.5 Z" fill="#F6D98A" stroke="#9A7A38"/></svg><div class="t" style="left:91px;top:536px"><i class="k5">I</i>cons</div><div style="position:absolute;left:65px;top:558px;width:6px;height:1px;background:repeating-linear-gradient(to right,#808080 0 1px,transparent 1px 2px)"></div><div style="position:absolute;left:56px;top:554px;width:9px;height:9px;border:1px solid #808080;box-sizing:border-box;background:#fff"></div><div style="position:absolute;left:58px;top:558px;width:5px;height:1px;background:#000"></div><div style="position:absolute;left:60px;top:556px;width:1px;height:5px;background:#000"></div><svg style="position:absolute;left:71px;top:550px" width="16" height="16" viewBox="0 0 16 16" ><path d="M2.5 13.5 V4.5 L3.5 3.5 H6.5 L7.5 4.5 H12.5 V8.5 H5.5 Z" fill="#FAE8B4" stroke="#9A7A38"/><path d="M2.5 13.5 L5.5 8.5 H15.5 L12.5 13.5 Z" fill="#F6D98A" stroke="#9A7A38"/></svg><div class="t" style="left:91px;top:553px"><i class="k5">I</i>nclude</div><div style="position:absolute;left:65px;top:575px;width:6px;height:1px;background:repeating-linear-gradient(to right,#808080 0 1px,transparent 1px 2px)"></div><div style="position:absolute;left:56px;top:571px;width:9px;height:9px;border:1px solid #808080;box-sizing:border-box;background:#fff"></div><div style="position:absolute;left:58px;top:575px;width:5px;height:1px;background:#000"></div><div style="position:absolute;left:60px;top:573px;width:1px;height:5px;background:#000"></div><svg style="position:absolute;left:71px;top:567px" width="16" height="16" viewBox="0 0 16 16" ><path d="M2.5 13.5 V4.5 L3.5 3.5 H6.5 L7.5 4.5 H12.5 V8.5 H5.5 Z" fill="#FAE8B4" stroke="#9A7A38"/><path d="M2.5 13.5 L5.5 8.5 H15.5 L12.5 13.5 Z" fill="#F6D98A" stroke="#9A7A38"/></svg><div class="t" style="left:91px;top:570px"><i class="km8">P</i>latform</div><div style="position:absolute;left:65px;top:592px;width:6px;height:1px;background:repeating-linear-gradient(to right,#808080 0 1px,transparent 1px 2px)"></div><div style="position:absolute;left:56px;top:588px;width:9px;height:9px;border:1px solid #808080;box-sizing:border-box;background:#fff"></div><div style="position:absolute;left:58px;top:592px;width:5px;height:1px;background:#000"></div><div style="position:absolute;left:60px;top:590px;width:1px;height:5px;background:#000"></div><svg style="position:absolute;left:71px;top:584px" width="16" height="16" viewBox="0 0 16 16" ><path d="M2.5 13.5 V4.5 L3.5 3.5 H6.5 L7.5 4.5 H12.5 V8.5 H5.5 Z" fill="#FAE8B4" stroke="#9A7A38"/><path d="M2.5 13.5 L5.5 8.5 H15.5 L12.5 13.5 Z" fill="#F6D98A" stroke="#9A7A38"/></svg><div class="t" style="left:91px;top:587px"><i class="km7">T</i>ools</div><div style="position:absolute;left:65px;top:609px;width:6px;height:1px;background:repeating-linear-gradient(to right,#808080 0 1px,transparent 1px 2px)"></div><div style="position:absolute;left:56px;top:605px;width:9px;height:9px;border:1px solid #808080;box-sizing:border-box;background:#fff"></div><div style="position:absolute;left:58px;top:609px;width:5px;height:1px;background:#000"></div><div style="position:absolute;left:60px;top:607px;width:1px;height:5px;background:#000"></div><svg style="position:absolute;left:71px;top:601px" width="16" height="16" viewBox="0 0 16 16" ><path d="M2.5 13.5 V4.5 L3.5 3.5 H6.5 L7.5 4.5 H12.5 V8.5 H5.5 Z" fill="#FAE8B4" stroke="#9A7A38"/><path d="M2.5 13.5 L5.5 8.5 H15.5 L12.5 13.5 Z" fill="#F6D98A" stroke="#9A7A38"/></svg><div class="t" style="left:91px;top:604px">W<i class="km12">E</i><i class="km9">B</i>-<i class="k5">I</i><i class="km8">N</i><i class="km8">F</i></div><div style="position:absolute;left:60px;top:626px;width:11px;height:1px;background:repeating-linear-gradient(to right,#808080 0 1px,transparent 1px 2px)"></div><svg style="position:absolute;left:71px;top:618px" width="16" height="16" viewBox="0 0 16 16" ><path d="M3.5 1.5 H10.5 L13.5 4.5 V14.5 H3.5 Z" fill="#FFFFFF" stroke="#7F8CA8"/><path d="M10.5 1.5 V4.5 H13.5" fill="#E8E8E8" stroke="#7F8CA8"/><path d="M7 4 V10 H5.5 M9 8 H12 V13 H8" stroke="#3A5DA8" stroke-width="1.2" fill="none"/></svg><div class="t" style="left:91px;top:621px"><i class="km10">A</i>pplication.js</div><div style="position:absolute;left:60px;top:643px;width:11px;height:1px;background:repeating-linear-gradient(to right,#808080 0 1px,transparent 1px 2px)"></div><svg style="position:absolute;left:71px;top:635px" width="16" height="16" viewBox="0 0 16 16" ><path d="M3.5 1.5 H10.5 L13.5 4.5 V14.5 H3.5 Z" fill="#FAF8F2" stroke="#A59A86"/><path d="M10.5 1.5 V4.5 H13.5" fill="#E8E8E8" stroke="#A59A86"/><rect x="5" y="5" width="6" height="1" fill="#7C6FA8"/><rect x="5" y="7" width="7" height="1" fill="#C07070"/><rect x="5" y="9" width="5" height="1" fill="#6F8FC0"/><rect x="5" y="11" width="7" height="1" fill="#7C6FA8"/></svg><div class="t" style="left:91px;top:638px"><i class="km10">A</i>pplication.jsp</div><div style="position:absolute;left:60px;top:660px;width:11px;height:1px;background:repeating-linear-gradient(to right,#808080 0 1px,transparent 1px 2px)"></div><svg style="position:absolute;left:71px;top:652px" width="16" height="16" viewBox="0 0 16 16" ><path d="M3.5 1.5 H10.5 L13.5 4.5 V14.5 H3.5 Z" fill="#FAF8F2" stroke="#A59A86"/><path d="M10.5 1.5 V4.5 H13.5" fill="#E8E8E8" stroke="#A59A86"/><rect x="5" y="5" width="6" height="1" fill="#7C6FA8"/><rect x="5" y="7" width="7" height="1" fill="#C07070"/><rect x="5" y="9" width="5" height="1" fill="#6F8FC0"/><rect x="5" y="11" width="7" height="1" fill="#7C6FA8"/></svg><div class="t" style="left:91px;top:655px"><i class="k5">I</i>nstall.jsp</div><div style="position:absolute;left:60px;top:677px;width:11px;height:1px;background:repeating-linear-gradient(to right,#808080 0 1px,transparent 1px 2px)"></div><svg style="position:absolute;left:71px;top:669px" width="16" height="16" viewBox="0 0 16 16" ><path d="M3.5 1.5 H10.5 L13.5 4.5 V14.5 H3.5 Z" fill="#FAF8F2" stroke="#A59A86"/><path d="M10.5 1.5 V4.5 H13.5" fill="#E8E8E8" stroke="#A59A86"/><rect x="5" y="5" width="6" height="1" fill="#7C6FA8"/><rect x="5" y="7" width="7" height="1" fill="#C07070"/><rect x="5" y="9" width="5" height="1" fill="#6F8FC0"/><rect x="5" y="11" width="7" height="1" fill="#7C6FA8"/></svg><div class="t" style="left:91px;top:672px"><i class="km10">L</i>icense<i class="km9">R</i>equest.jsp</div><div style="position:absolute;left:60px;top:694px;width:11px;height:1px;background:repeating-linear-gradient(to right,#808080 0 1px,transparent 1px 2px)"></div><svg style="position:absolute;left:71px;top:686px" width="16" height="16" viewBox="0 0 16 16" ><path d="M3.5 1.5 H10.5 L13.5 4.5 V14.5 H3.5 Z" fill="#FAF8F2" stroke="#A59A86"/><path d="M10.5 1.5 V4.5 H13.5" fill="#E8E8E8" stroke="#A59A86"/><rect x="5" y="5" width="6" height="1" fill="#7C6FA8"/><rect x="5" y="7" width="7" height="1" fill="#C07070"/><rect x="5" y="9" width="5" height="1" fill="#6F8FC0"/><rect x="5" y="11" width="7" height="1" fill="#7C6FA8"/></svg><div class="t" style="left:91px;top:689px"><i class="km10">L</i>ogin.jsp</div><div style="position:absolute;left:60px;top:711px;width:11px;height:1px;background:repeating-linear-gradient(to right,#808080 0 1px,transparent 1px 2px)"></div><svg style="position:absolute;left:71px;top:703px" width="16" height="16" viewBox="0 0 16 16" ><path d="M3.5 1.5 H10.5 L13.5 4.5 V14.5 H3.5 Z" fill="#FAF8F2" stroke="#A59A86"/><path d="M10.5 1.5 V4.5 H13.5" fill="#E8E8E8" stroke="#A59A86"/><rect x="5" y="5" width="6" height="1" fill="#7C6FA8"/><rect x="5" y="7" width="7" height="1" fill="#C07070"/><rect x="5" y="9" width="5" height="1" fill="#6F8FC0"/><rect x="5" y="11" width="7" height="1" fill="#7C6FA8"/></svg><div class="t" style="left:91px;top:706px"><i class="km10">L</i>ogout.jsp</div></div></div><div style="position:absolute;left:247px;top:75px;width:769px;height:492px;border:1px solid #707078;box-sizing:border-box;border-radius:4px 4px 0 0;background:#D4D0C8"></div><div style="position:absolute;left:359px;top:76px;width:1px;height:22px;background:#808080"></div><svg style="position:absolute;left:251px;top:79px" width="16" height="16" viewBox="0 0 16 16" ><path d="M3.5 1.5 H10.5 L13.5 4.5 V14.5 H3.5 Z" fill="#EAF2FB" stroke="#8C8C8C"/><path d="M10.5 1.5 V4.5 H13.5" fill="#E8E8E8" stroke="#8C8C8C"/><path d="M9 5 V11 Q9 13 7 13 H6" stroke="#2F5CAA" stroke-width="1.8" fill="none"/><path d="M3.5 8.5 L7.2 15.3 H-0.2 Z" fill="#F2D060" stroke="#A88A30" stroke-width="0.8"/><rect x="3" y="10.5" width="1" height="2.6" fill="#202020"/><rect x="3" y="13.7" width="1" height="1" fill="#202020"/></svg><div class="t" style="left:271px;top:82px;"><i class="km9">C</i>lass<i class="km9">U</i><i class="k5">I</i>.java</div><div style="position:absolute;left:482px;top:76px;width:1px;height:22px;background:#808080"></div><svg style="position:absolute;left:362px;top:79px" width="16" height="16" viewBox="0 0 16 16" ><path d="M3.5 1.5 H10.5 L13.5 4.5 V14.5 H3.5 Z" fill="#EAF2FB" stroke="#8C8C8C"/><path d="M10.5 1.5 V4.5 H13.5" fill="#E8E8E8" stroke="#8C8C8C"/><path d="M9 5 V11 Q9 13 7 13 H6" stroke="#2F5CAA" stroke-width="1.8" fill="none"/></svg><div class="t" style="left:382px;top:82px;"><i class="km8">S</i>tudent<i class="km9">U</i><i class="k5">I</i>.java</div><div style="position:absolute;left:602px;top:76px;width:1px;height:22px;background:#808080"></div><svg style="position:absolute;left:485px;top:79px" width="16" height="16" viewBox="0 0 16 16" ><path d="M3.5 1.5 H10.5 L13.5 4.5 V14.5 H3.5 Z" fill="#F6F9FC" stroke="#8C8C8C"/><path d="M10.5 1.5 V4.5 H13.5" fill="#E8E8E8" stroke="#8C8C8C"/><path d="M5.5 6 H11 L5.5 12 H11.5" stroke="#2F66B8" stroke-width="1.8" fill="none"/></svg><div class="t" style="left:505px;top:82px;">*<i class="km8">P</i>latform.zdm</div><div style="position:absolute;left:602px;top:76px;width:124px;height:23px;background:linear-gradient(#F4F4F6 0px,#E6E8F0 6px,#A9AFCB 23px)"></div><svg style="position:absolute;left:709px;top:82px" width="10" height="10" viewBox="0 0 10 10"><path d="M0.5 2.5 L2.5 0.5 L5 3 L7.5 0.5 L9.5 2.5 L7 5 L9.5 7.5 L7.5 9.5 L5 7 L2.5 9.5 L0.5 7.5 L3 5 Z" fill="#fff" stroke="#000"/></svg><div style="position:absolute;left:726px;top:76px;width:1px;height:22px;background:#808080"></div><svg style="position:absolute;left:605px;top:79px" width="16" height="16" viewBox="0 0 16 16" ><path d="M3.5 1.5 H10.5 L13.5 4.5 V14.5 H3.5 Z" fill="#F6F9FC" stroke="#8C8C8C"/><path d="M10.5 1.5 V4.5 H13.5" fill="#E8E8E8" stroke="#8C8C8C"/><path d="M5.5 6 H11 L5.5 12 H11.5" stroke="#2F66B8" stroke-width="1.8" fill="none"/></svg><div class="t" style="left:625px;top:82px;">*<i class="km12">E</i>du<i class="km10">A</i>dmin.zdm</div><div style="position:absolute;left:248px;top:98px;width:354px;height:1px;background:#808080"></div><div style="position:absolute;left:726px;top:98px;width:289px;height:1px;background:#808080"></div><div style="position:absolute;left:981px;top:80px;width:10px;height:4px;border:1px solid #303030;background:#fff;box-sizing:border-box"></div><div style="position:absolute;left:999px;top:80px;width:10px;height:10px;border:1px solid #303030;border-top-width:2px;background:#fff;box-sizing:border-box"></div><div style="position:absolute;left:248px;top:99px;width:767px;height:467px;box-shadow:inset 0 0 0 1px #A8ACC0"></div><div style="position:absolute;left:249px;top:100px;width:765px;height:465px;box-shadow:inset 0 0 0 1px #D2D4E2"></div><div style="position:absolute;left:251px;top:102px;width:761px;height:444px;background:#D4D0C8"></div><div class="t" style="left:255px;top:109px;"><i class="km10">A</i>ctions:</div><svg style="position:absolute;left:300px;top:106px" width="16" height="16" viewBox="0 0 16 16" ><rect x="1.5" y="3.5" width="11" height="11" fill="#F8F6EA" stroke="#A89C70"/><rect x="2" y="4" width="5" height="2" fill="#5A7EC0"/><path d="M12 0.5 V6.5 M9 3.5 H15" stroke="#E8B820" stroke-width="1.5"/></svg><div class="t" style="left:318px;top:109px;"><i class="km9">C</i>reate <i class="km7">T</i>able</div><svg style="position:absolute;left:393px;top:113px" width="5" height="3"><path d="M0 0 H5 L2.5 3 Z" fill="#000"/></svg><div style="position:absolute;left:250px;top:127px;width:152px;height:419px;background:#fff;box-shadow:inset 1px 1px #808080,inset -1px -1px #FFFFFF,inset 2px 2px #404040,inset -2px -2px #D4D0C8;"></div><div style="position:absolute;left:274px;top:129px;width:102px;height:16px;background:#D4D0C8"></div><div style="position:absolute;left:264px;top:137px;width:9px;height:1px;background:repeating-linear-gradient(to right,#808080 0 1px,transparent 1px 2px)"></div><div class="t" style="left:275px;top:131px;"><i class="km9">Z</i><i class="km9">C</i><i class="km8">S</i>tudent(</div><svg style="position:absolute;left:331px;top:133px" width="36" height="11"><path d="M2 0h1v1h-1zM4 0h1v1h-1zM8 0h1v1h-1zM3 1h1v1h-1zM5 1h1v1h-1zM8 1h1v1h-1zM0 2h11v1h-11zM0 3h1v1h-1zM10 3h1v1h-1zM0 4h1v1h-1zM2 4h6v1h-6zM9 4h1v1h-1zM6 5h1v1h-1zM5 6h1v1h-1zM0 7h11v1h-11zM5 8h1v1h-1zM5 9h1v1h-1zM3 10h3v1h-3zM17 0h1v1h-1zM14 1h1v1h-1zM17 1h1v1h-1zM14 2h1v1h-1zM17 2h1v1h-1zM21 2h1v1h-1zM13 3h10v1h-10zM13 4h1v1h-1zM17 4h1v1h-1zM12 5h1v1h-1zM17 5h1v1h-1zM14 6h8v1h-8zM17 7h1v1h-1zM17 8h1v1h-1zM17 9h1v1h-1zM12 10h11v1h-11zM29 0h1v1h-1zM24 1h11v1h-11zM29 2h1v1h-1zM25 3h9v1h-9zM29 4h1v1h-1zM24 5h11v1h-11zM27 6h1v1h-1zM29 6h1v1h-1zM33 6h1v1h-1zM26 7h2v1h-2zM30 7h1v1h-1zM32 7h1v1h-1zM25 8h1v1h-1zM27 8h1v1h-1zM31 8h1v1h-1zM24 9h1v1h-1zM27 9h1v1h-1zM29 9h1v1h-1zM32 9h1v1h-1zM27 10h2v1h-2zM33 10h2v1h-2z" fill="#000" shape-rendering="crispEdges"/></svg><div class="t" style="left:366px;top:131px;">)</div><div style="position:absolute;left:252px;top:529px;width:148px;height:16px;background-color:#fff;background-image:repeating-conic-gradient(#D4D0C8 0 25%,#fff 0 50%);background-size:2px 2px;"></div><div style="position:absolute;left:252px;top:529px;width:16px;height:16px;background:#D4D0C8;box-shadow:inset -1px -1px #404040,inset 1px 1px #D4D0C8,inset -2px -2px #808080,inset 2px 2px #FFFFFF;"></div><svg style="position:absolute;left:257px;top:533px" width="4" height="7"><path d="M4 0 V7 L0 3.5 Z" fill="#000"/></svg><div style="position:absolute;left:268px;top:529px;width:112px;height:16px;background:#D4D0C8;box-shadow:inset -1px -1px #404040,inset 1px 1px #D4D0C8,inset -2px -2px #808080,inset 2px 2px #FFFFFF;"></div><div style="position:absolute;left:384px;top:529px;width:16px;height:16px;background:#D4D0C8;box-shadow:inset -1px -1px #404040,inset 1px 1px #D4D0C8,inset -2px -2px #808080,inset 2px 2px #FFFFFF;"></div><svg style="position:absolute;left:390px;top:533px" width="4" height="7"><path d="M0 0 V7 L4 3.5 Z" fill="#000"/></svg><div style="position:absolute;left:405px;top:122px;width:608px;height:425px;background:#D4D0C8;box-shadow:inset 1px 1px #FFFFFF,inset -1px -1px #404040,inset -2px -2px #808080"></div><div style="position:absolute;left:407px;top:103px;width:87px;height:19px;background:#D4D0C8;border-top:1px solid #FFFFFF;border-left:1px solid #FFFFFF;box-shadow:inset -1px 0 #404040,inset -2px 0 #808080;border-radius:2px 2px 0 0;box-sizing:border-box"></div><div style="position:absolute;left:609px;top:104px;width:92px;height:18px;background:#D4D0C8;border-top:1px solid #FFFFFF;border-left:1px solid #FFFFFF;box-shadow:inset -1px 0 #404040,inset -2px 0 #808080;border-radius:2px 2px 0 0;box-sizing:border-box"></div><div style="position:absolute;left:492px;top:101px;width:119px;height:23px;background:#D4D0C8;border-top:1px solid #FFFFFF;border-left:1px solid #FFFFFF;box-shadow:inset -1px 0 #404040,inset -2px 0 #808080;border-radius:2px 2px 0 0;box-sizing:border-box"></div><svg style="position:absolute;left:415px;top:105px" width="16" height="16" viewBox="0 0 16 16" ><rect x="2.5" y="1.5" width="11" height="13" fill="#F0FAF4" stroke="#90A8A0"/><circle cx="5" cy="4.5" r="1.2" fill="#3A9A6A"/><circle cx="5" cy="8" r="1.2" fill="#3A9A6A"/><circle cx="5" cy="11.5" r="1.2" fill="#3A9A6A"/><path d="M7 4.5 H12 M7 8 H12 M7 11.5 H12" stroke="#5A7A9A"/></svg><div class="t" style="left:434px;top:108px;"><i class="km9">C</i>olumn <i class="km10">L</i>ist</div><svg style="position:absolute;left:502px;top:103px" width="16" height="16" viewBox="0 0 16 16" ><rect x="1.5" y="1.5" width="13" height="13" fill="#F4F8FC" stroke="#7A90B0"/><rect x="2" y="2" width="12" height="5" fill="#DCE8F4"/><path d="M1.5 7.5 H14.5" stroke="#7A90B0"/><path d="M4 10 H12 M4 12 H10" stroke="#5A7EC0"/></svg><div class="t" style="left:522px;top:106px;"><i class="km7">T</i>able <i class="km8">P</i>roperties</div><svg style="position:absolute;left:615px;top:106px" width="16" height="16" viewBox="0 0 16 16" ><path d="M3.5 1.5 H10.5 L13.5 4.5 V14.5 H3.5 Z" fill="#FFFFFF" stroke="#9AA6BC"/><path d="M10.5 1.5 V4.5 H13.5" fill="#E8E8E8" stroke="#9AA6BC"/><path d="M4 5 H11 M4 7 H11 M4 9 H11 M4 11 H9" stroke="#8FA8D0"/></svg><div class="t" style="left:634px;top:108px;"><i class="km8">S</i><i class="km6">Q</i><i class="km10">L</i> <i class="km8">P</i>review</div><div style="position:absolute;left:419px;top:129px;width:122px;height:24px;background:#D4D0C8;box-shadow:inset -1px -1px #404040,inset 1px 1px #FFFFFF,inset -2px -2px #808080;"></div><svg style="position:absolute;left:428px;top:132px" width="16" height="16" viewBox="0 0 16 16" ><rect x="1.5" y="2.5" width="13" height="11" fill="#F4F4F4" stroke="#8A8A8A"/><path d="M1.5 5.5 H14.5 M1.5 10.5 H14.5" stroke="#8A8A8A"/><rect x="4" y="6" width="10" height="4" fill="#8AB0E0"/><path d="M5 8 H13" stroke="#fff" stroke-dasharray="1 1"/></svg><div class="t" style="left:448px;top:135px;"><i class="km8">S</i>ync to <i class="km9">D</i>atabase</div><div style="position:absolute;left:550px;top:129px;width:84px;height:24px;background:#D4D0C8;box-shadow:inset -1px -1px #404040,inset 1px 1px #FFFFFF,inset -2px -2px #808080;"></div><svg style="position:absolute;left:559px;top:132px" width="16" height="16" viewBox="0 0 16 16" ><rect x="1.5" y="1.5" width="12" height="13" fill="#F8F8F8" stroke="#9A9A9A"/><rect x="3" y="3" width="3" height="3" fill="#5AAA6A"/><rect x="3" y="9" width="3" height="3" fill="#D86A8A"/><path d="M7 4.5 H12 M7 10.5 H12" stroke="#7A7A7A"/></svg><div class="t" style="left:579px;top:135px;"><i class="km12">V</i>iew <i class="km9">D</i>ata</div><div style="position:absolute;left:644px;top:129px;width:121px;height:24px;background:#D4D0C8;box-shadow:inset -1px -1px #404040,inset 1px 1px #FFFFFF,inset -2px -2px #808080;"></div><svg style="position:absolute;left:653px;top:132px" width="16" height="16" viewBox="0 0 16 16" ><path d="M3 1 V12 M3 5 H7 M3 9 H7" stroke="#5A7EC0"/><rect x="1.5" y="0.5" width="3" height="2" fill="#5A7EC0"/><rect x="6.5" y="4" width="3" height="2" fill="#5A7EC0"/><path d="M6 15 L15 6" stroke="#C09030" stroke-width="2"/><path d="M5 15.5 L6.5 13.5" stroke="#000"/></svg><div class="t" style="left:673px;top:135px;"><i class="km13">G</i>enerate <i class="km8">S</i>chema</div><div style="position:absolute;left:775px;top:129px;width:136px;height:24px;background:#D4D0C8;box-shadow:inset -1px -1px #404040,inset 1px 1px #FFFFFF,inset -2px -2px #808080;"></div><svg style="position:absolute;left:784px;top:132px" width="16" height="16" viewBox="0 0 16 16" ><rect x="1.5" y="3.5" width="10" height="12" fill="#F4F4F4" stroke="#B8B090"/><rect x="4.5" y="0.5" width="10" height="12" fill="#FCFCFC" stroke="#A8A8A8"/><path d="M6 3.5 H13 M6 5.5 H13 M6 7.5 H13 M6 9.5 H13" stroke="#6A8AC0"/></svg><div class="t" style="left:804px;top:135px;"><i class="km13">G</i>enerate <i class="km9">C</i><i class="km9">R</i><i class="km9">U</i><i class="km9">D</i> <i class="km8">F</i>iles</div><div style="position:absolute;left:419px;top:170px;width:579px;height:140px;border:1px solid #808080;box-sizing:border-box"></div><div style="position:absolute;left:420px;top:171px;width:579px;height:140px;border:1px solid #FFFFFF;border-right:1px solid #FFFFFF;box-sizing:border-box;border-top-color:#FFFFFF"></div><div style="position:absolute;left:425px;top:165px;width:88px;height:10px;background:#D4D0C8"></div><div class="t" style="left:427px;top:165px;"><i class="km9">B</i>asic <i class="k5">I</i>nformation</div><div style="position:absolute;left:419px;top:324px;width:579px;height:122px;border:1px solid #808080;box-sizing:border-box"></div><div style="position:absolute;left:420px;top:325px;width:579px;height:122px;border:1px solid #FFFFFF;border-right:1px solid #FFFFFF;box-sizing:border-box;border-top-color:#FFFFFF"></div><div style="position:absolute;left:425px;top:319px;width:84px;height:10px;background:#D4D0C8"></div><div class="t" style="left:427px;top:319px;"><i class="km9">C</i><i class="km9">R</i><i class="km9">U</i><i class="km9">D</i> <i class="k5">I</i>nformation</div><div class="t" style="left:432px;top:183px;"><i class="km7">T</i>able <i class="km8">N</i>ame:</div><div class="t" style="left:432px;top:211px;"><i class="km7">T</i>able <i class="km9">C</i>ode:</div><div class="t" style="left:432px;top:239px;"><i class="km5">M</i>emo:</div><div style="position:absolute;left:547px;top:187px;width:207px;height:19px;background:#fff;box-shadow:inset 1px 1px #808080,inset -1px -1px #FFFFFF,inset 2px 2px #404040,inset -2px -2px #D4D0C8;"></div><svg style="position:absolute;left:550px;top:191px" width="36" height="11"><path d="M2 0h1v1h-1zM4 0h1v1h-1zM8 0h1v1h-1zM3 1h1v1h-1zM5 1h1v1h-1zM8 1h1v1h-1zM0 2h11v1h-11zM0 3h1v1h-1zM10 3h1v1h-1zM0 4h1v1h-1zM2 4h6v1h-6zM9 4h1v1h-1zM6 5h1v1h-1zM5 6h1v1h-1zM0 7h11v1h-11zM5 8h1v1h-1zM5 9h1v1h-1zM3 10h3v1h-3zM17 0h1v1h-1zM14 1h1v1h-1zM17 1h1v1h-1zM14 2h1v1h-1zM17 2h1v1h-1zM21 2h1v1h-1zM13 3h10v1h-10zM13 4h1v1h-1zM17 4h1v1h-1zM12 5h1v1h-1zM17 5h1v1h-1zM14 6h8v1h-8zM17 7h1v1h-1zM17 8h1v1h-1zM17 9h1v1h-1zM12 10h11v1h-11zM29 0h1v1h-1zM24 1h11v1h-11zM29 2h1v1h-1zM25 3h9v1h-9zM29 4h1v1h-1zM24 5h11v1h-11zM27 6h1v1h-1zM29 6h1v1h-1zM33 6h1v1h-1zM26 7h2v1h-2zM30 7h1v1h-1zM32 7h1v1h-1zM25 8h1v1h-1zM27 8h1v1h-1zM31 8h1v1h-1zM24 9h1v1h-1zM27 9h1v1h-1zM29 9h1v1h-1zM32 9h1v1h-1zM27 10h2v1h-2zM33 10h2v1h-2z" fill="#000" shape-rendering="crispEdges"/></svg><div style="position:absolute;left:547px;top:210px;width:207px;height:19px;background:#fff;box-shadow:inset 1px 1px #808080,inset -1px -1px #FFFFFF,inset 2px 2px #404040,inset -2px -2px #D4D0C8;"></div><div class="t" style="left:550px;top:214px;"><i class="km9">Z</i><i class="km9">C</i><i class="km8">S</i>tudent</div><div style="position:absolute;left:547px;top:238px;width:428px;height:66px;background:#fff;box-shadow:inset 1px 1px #808080,inset -1px -1px #FFFFFF,inset 2px 2px #404040,inset -2px -2px #D4D0C8;"></div><div style="position:absolute;left:958px;top:240px;width:15px;height:62px;background-color:#fff;background-image:repeating-conic-gradient(#D4D0C8 0 25%,#fff 0 50%);background-size:2px 2px;"></div><div style="position:absolute;left:958px;top:240px;width:16px;height:16px;background:#D4D0C8;box-shadow:inset -1px -1px #404040,inset 1px 1px #D4D0C8,inset -2px -2px #808080,inset 2px 2px #FFFFFF;"></div><svg style="position:absolute;left:962px;top:246px" width="7" height="4"><path d="M0 4 H7 L3.5 0 Z" fill="#808080"/></svg><div style="position:absolute;left:958px;top:286px;width:16px;height:16px;background:#D4D0C8;box-shadow:inset -1px -1px #404040,inset 1px 1px #D4D0C8,inset -2px -2px #808080,inset 2px 2px #FFFFFF;"></div><svg style="position:absolute;left:962px;top:291px" width="7" height="4"><path d="M0 0 H7 L3.5 4 Z" fill="#808080"/></svg><div style="position:absolute;left:547px;top:337px;width:13px;height:13px;background:#fff;box-shadow:inset 1px 1px #808080,inset -1px -1px #FFFFFF,inset 2px 2px #404040,inset -2px -2px #D4D0C8;"></div><svg style="position:absolute;left:550px;top:340px" width="7" height="7"><path d="M6 0h1v1h-1zM5 1h1v1h-1zM6 1h1v1h-1zM0 2h1v1h-1zM4 2h1v1h-1zM5 2h1v1h-1zM6 2h1v1h-1zM0 3h1v1h-1zM1 3h1v1h-1zM3 3h1v1h-1zM4 3h1v1h-1zM5 3h1v1h-1zM0 4h1v1h-1zM1 4h1v1h-1zM2 4h1v1h-1zM3 4h1v1h-1zM4 4h1v1h-1zM1 5h1v1h-1zM2 5h1v1h-1zM3 5h1v1h-1zM2 6h1v1h-1z" fill="#000" shape-rendering="crispEdges"/></svg><div class="t" style="left:564px;top:338px;"><i class="km13">G</i>enerate <i class="km9">C</i><i class="km9">R</i><i class="km9">U</i><i class="km9">D</i> <i class="km8">F</i>iles</div><div style="position:absolute;left:683px;top:337px;width:13px;height:13px;background:#fff;box-shadow:inset 1px 1px #808080,inset -1px -1px #FFFFFF,inset 2px 2px #404040,inset -2px -2px #D4D0C8;"></div><div class="t" style="left:700px;top:338px;"><i class="km9">U</i>se <i class="km8">F</i>ront-<i class="km12">E</i>nd <i class="km8">S</i>tyle <i class="km9">U</i><i class="k5">I</i></div><div class="t" style="left:432px;top:365px;"><i class="km9">C</i><i class="km9">R</i><i class="km9">U</i><i class="km9">D</i> <i class="km8">F</i>ile <i class="km8">P</i>refix:</div><div class="t" style="left:432px;top:393px;"><i class="km9">U</i><i class="k5">I</i> <i class="km9">C</i><i class="km9">R</i><i class="km9">U</i><i class="km9">D</i> <i class="km8">F</i>iles <i class="km8">P</i>ath:</div><div class="t" style="left:432px;top:421px;"><i class="km8">J</i>ava <i class="km9">C</i><i class="km9">R</i><i class="km9">U</i><i class="km9">D</i> <i class="km8">F</i>iles <i class="km8">P</i>ath:</div><div style="position:absolute;left:547px;top:364px;width:207px;height:19px;background:#fff;box-shadow:inset 1px 1px #808080,inset -1px -1px #FFFFFF,inset 2px 2px #404040,inset -2px -2px #D4D0C8;"></div><div class="t" style="left:550px;top:368px;"><i class="km8">S</i>tudent</div><div style="position:absolute;left:547px;top:392px;width:207px;height:19px;background:#FFFFEC;box-shadow:inset 1px 1px #808080,inset -1px -1px #FFFFFF,inset 2px 2px #404040,inset -2px -2px #D4D0C8;"></div><div class="t" style="left:550px;top:396px;">/<i class="km12">E</i>du<i class="km10">A</i>dmin/<i class="km9">U</i><i class="k5">I</i>/<i class="km12">E</i>du<i class="km10">A</i>dmin</div><div style="position:absolute;left:547px;top:420px;width:207px;height:19px;background:#FFFFEC;box-shadow:inset 1px 1px #808080,inset -1px -1px #FFFFFF,inset 2px 2px #404040,inset -2px -2px #D4D0C8;"></div><div class="t" style="left:550px;top:424px;">/<i class="km12">E</i>du<i class="km10">A</i>dmin/<i class="km8">J</i><i class="km10">A</i><i class="km12">V</i><i class="km10">A</i>/com/zving/eduadmin</div><div style="position:absolute;left:759px;top:392px;width:59px;height:20px;background:#D4D0C8;box-shadow:inset -1px -1px #404040,inset 1px 1px #FFFFFF,inset -2px -2px #808080;"></div><div class="t" style="left:764px;top:396px;"><i class="km9">B</i>rowse...</div><div style="position:absolute;left:759px;top:420px;width:59px;height:20px;background:#D4D0C8;border:1px solid #000;box-sizing:border-box;box-shadow:inset -1px -1px #404040,inset 1px 1px #FFFFFF,inset -2px -2px #808080"></div><div style="position:absolute;left:763px;top:424px;width:51px;height:12px;border:1px dotted #000;box-sizing:border-box"></div><div class="t" style="left:764px;top:424px;"><i class="km9">B</i>rowse...</div><div style="position:absolute;left:311px;top:547px;width:701px;height:1px;background:#808080"></div><div style="position:absolute;left:250px;top:545px;width:61px;height:19px;background:#fff"></div><div style="position:absolute;left:311px;top:547px;width:1px;height:17px;background:#808080"></div><svg style="position:absolute;left:257px;top:550px" width="48" height="11"><path d="M3 0h1v1h-1zM9 0h2v1h-2zM0 1h6v1h-6zM7 1h2v1h-2zM1 2h1v1h-1zM3 2h1v1h-1zM7 2h1v1h-1zM2 3h1v1h-1zM7 3h1v1h-1zM0 4h6v1h-6zM7 4h4v1h-4zM3 5h1v1h-1zM7 5h1v1h-1zM9 5h1v1h-1zM0 6h6v1h-6zM7 6h1v1h-1zM9 6h1v1h-1zM1 7h1v1h-1zM3 7h2v1h-2zM7 7h1v1h-1zM9 7h1v1h-1zM3 8h1v1h-1zM5 8h1v1h-1zM7 8h1v1h-1zM9 8h1v1h-1zM0 9h1v1h-1zM3 9h1v1h-1zM6 9h1v1h-1zM9 9h1v1h-1zM2 10h2v1h-2zM5 10h1v1h-1zM9 10h1v1h-1zM18 0h1v1h-1zM12 1h3v1h-3zM16 1h6v1h-6zM14 2h1v1h-1zM18 2h1v1h-1zM21 2h1v1h-1zM13 3h1v1h-1zM15 3h8v1h-8zM12 4h1v1h-1zM18 4h1v1h-1zM21 4h1v1h-1zM13 5h2v1h-2zM16 5h6v1h-6zM14 6h1v1h-1zM18 6h1v1h-1zM12 7h1v1h-1zM14 7h1v1h-1zM16 7h7v1h-7zM13 8h1v1h-1zM18 8h1v1h-1zM14 9h1v1h-1zM18 9h1v1h-1zM12 10h1v1h-1zM15 10h8v1h-8zM27 0h1v1h-1zM31 0h1v1h-1zM27 1h1v1h-1zM31 1h1v1h-1zM26 2h1v1h-1zM32 2h1v1h-1zM26 3h1v1h-1zM32 3h1v1h-1zM25 4h1v1h-1zM33 4h1v1h-1zM24 5h1v1h-1zM26 5h7v1h-7zM34 5h1v1h-1zM28 6h1v1h-1zM32 6h1v1h-1zM28 7h1v1h-1zM32 7h1v1h-1zM27 8h1v1h-1zM32 8h1v1h-1zM26 9h1v1h-1zM32 9h1v1h-1zM24 10h2v1h-2zM29 10h3v1h-3zM38 0h1v1h-1zM41 0h1v1h-1zM44 0h1v1h-1zM39 1h1v1h-1zM41 1h1v1h-1zM43 1h1v1h-1zM36 2h11v1h-11zM39 3h1v1h-1zM41 3h1v1h-1zM43 3h1v1h-1zM38 4h1v1h-1zM41 4h1v1h-1zM44 4h1v1h-1zM36 5h2v1h-2zM45 5h2v1h-2zM41 6h1v1h-1zM36 7h11v1h-11zM40 8h1v1h-1zM42 8h1v1h-1zM39 9h1v1h-1zM43 9h1v1h-1zM36 10h3v1h-3zM44 10h3v1h-3z" fill="#000" shape-rendering="crispEdges"/></svg><div style="position:absolute;left:382px;top:547px;width:1px;height:17px;background:#808080"></div><div style="position:absolute;left:477px;top:547px;width:1px;height:17px;background:#808080"></div><div class="t" style="left:318px;top:550px;"><i class="km9">U</i>pdate <i class="km8">S</i><i class="km6">Q</i><i class="km10">L</i></div><div class="t" style="left:389px;top:550px;"><i class="km9">D</i>atabase <i class="km12">E</i>xport</div><div style="position:absolute;left:247px;top:571px;width:769px;height:163px;border:1px solid #808080;box-sizing:border-box;border-radius:4px 4px 0 0;background:#D4D0C8"></div><div style="position:absolute;left:603px;top:572px;width:87px;height:23px;background:linear-gradient(#FFFFFF 0px,#F4F3F0 6px,#D4D0C8 30px)"></div><div style="position:absolute;left:248px;top:594px;width:355px;height:1px;background:#808080"></div><div style="position:absolute;left:690px;top:594px;width:325px;height:1px;background:#808080"></div><div style="position:absolute;left:318px;top:572px;width:1px;height:22px;background:#808080"></div><div style="position:absolute;left:386px;top:572px;width:1px;height:22px;background:#808080"></div><div style="position:absolute;left:468px;top:572px;width:1px;height:22px;background:#808080"></div><div style="position:absolute;left:533px;top:572px;width:1px;height:22px;background:#808080"></div><div style="position:absolute;left:603px;top:572px;width:1px;height:22px;background:#808080"></div><div style="position:absolute;left:690px;top:572px;width:1px;height:22px;background:#808080"></div><svg style="position:absolute;left:252px;top:576px" width="16" height="16" viewBox="0 0 16 16" ><rect x="0.5" y="0.5" width="11" height="15" fill="#F8F8F8" stroke="#8A8A8A"/><path d="M0.5 7.5 H11.5" stroke="#8A8A8A"/><circle cx="6" cy="4" r="2.8" fill="#E04040"/><path d="M6 9 L9 14 H3 Z" fill="#F08030"/><path d="M13 2 V14" stroke="#A0C0E0" stroke-width="2"/></svg><div class="t" style="left:270px;top:578px;"><i class="km8">P</i>roblems</div><svg style="position:absolute;left:323px;top:576px" width="16" height="16" viewBox="0 0 16 16" ><circle cx="7" cy="8" r="4.5" fill="#E4EEF6"/><text x="7" y="11" font-size="10" text-anchor="middle" fill="#3A7AB8" font-family="Liberation Sans">@</text></svg><div class="t" style="left:341px;top:578px;"><i class="km8">J</i>avadoc</div><svg style="position:absolute;left:390px;top:576px" width="16" height="16" viewBox="0 0 16 16" ><path d="M3.5 1.5 H10.5 L13.5 4.5 V14.5 H3.5 Z" fill="#FFFFFF" stroke="#A0A0A0"/><path d="M10.5 1.5 V4.5 H13.5" fill="#E8E8E8" stroke="#A0A0A0"/><path d="M9 5 Q6 5 6 7.5 Q4.5 8 6 8.5 Q6 11 9 11" stroke="#3A70B0" fill="none"/><path d="M10 9 H15 L13 7 M15 9 L13 11" stroke="#E0A020" stroke-width="1.8" fill="none"/></svg><div class="t" style="left:410px;top:578px;"><i class="km9">D</i>eclaration</div><svg style="position:absolute;left:473px;top:576px" width="16" height="16" viewBox="0 0 16 16" ><path d="M3 1 V15 M8 1 V15 M13 1 V15" stroke="#5A8A5A"/><circle cx="3" cy="10" r="2" fill="#7AC87A" stroke="#3A7A3A"/><circle cx="8" cy="5" r="2" fill="#7AC87A" stroke="#3A7A3A"/><circle cx="13" cy="11" r="2" fill="#6AA0E0" stroke="#3A6AB0"/></svg><div class="t" style="left:492px;top:578px;"><i class="km8">S</i>ervers</div><svg style="position:absolute;left:535px;top:576px" width="16" height="16" viewBox="0 0 16 16" ><circle cx="6.5" cy="9" r="5.5" fill="#F4D890" stroke="#5A7EC0"/><circle cx="6.5" cy="9" r="3" fill="#F8E8B0"/><path d="M6 2 H15 M8 1 V3 M11 1 V3 M14 1 V3" stroke="#5A7EC0"/></svg><div class="t" style="left:556px;top:578px;"><i class="km8">P</i>rogress</div><svg style="position:absolute;left:608px;top:576px" width="16" height="16" viewBox="0 0 16 16" ><rect x="1.5" y="1.5" width="13" height="10" fill="#EAF2FA" stroke="#2A5A9A" stroke-width="1.5"/><path d="M4 5 H10 M4 7.5 H8" stroke="#2A5A9A"/><path d="M5 13.5 H11 M8 11.5 V13.5" stroke="#2A5A9A" stroke-width="1.5"/></svg><div class="t" style="left:626px;top:578px;"><i class="km9">C</i>onsole</div><svg style="position:absolute;left:673px;top:578px" width="10" height="10" viewBox="0 0 10 10"><path d="M0.5 2.5 L2.5 0.5 L5 3 L7.5 0.5 L9.5 2.5 L7 5 L9.5 7.5 L7.5 9.5 L5 7 L2.5 9.5 L0.5 7.5 L3 5 Z" fill="#fff" stroke="#000"/></svg><svg style="position:absolute;left:884px;top:575px" width="16" height="16" viewBox="0 0 16 16" ><rect x="1.5" y="6.5" width="11" height="7" fill="#F4F4F4" stroke="#D0D0D0"/><path d="M6 6 L12 1" stroke="#C0C0C0" stroke-width="1.5"/></svg><svg style="position:absolute;left:907px;top:575px" width="16" height="16" viewBox="0 0 16 16" ><rect x="1.5" y="1.5" width="12" height="9" fill="#E8E8E8" stroke="#707070" stroke-width="1.5"/><path d="M4 4.5 H10 M4 6.5 H8" stroke="#707070"/><path d="M4 13.5 H11 M7.5 10.5 V13.5" stroke="#707070" stroke-width="1.5"/></svg><svg style="position:absolute;left:930px;top:580px" width="5" height="3"><path d="M0 0 H5 L2.5 3 Z" fill="#A0A0A0"/></svg><svg style="position:absolute;left:943px;top:575px" width="16" height="16" viewBox="0 0 16 16" ><rect x="1.5" y="3.5" width="11" height="11" fill="#F8F6EA" stroke="#A89C70"/><rect x="2" y="4" width="5" height="2" fill="#5A7EC0"/><path d="M12 0.5 V6.5 M9 3.5 H15" stroke="#E8B820" stroke-width="1.5"/></svg><svg style="position:absolute;left:967px;top:580px" width="5" height="3"><path d="M0 0 H5 L2.5 3 Z" fill="#000"/></svg><div style="position:absolute;left:981px;top:576px;width:10px;height:4px;border:1px solid #303030;background:#fff;box-sizing:border-box"></div><div style="position:absolute;left:999px;top:576px;width:10px;height:10px;border:1px solid #303030;border-top-width:2px;background:#fff;box-sizing:border-box"></div><div class="t" style="left:249px;top:598px;"><i class="km8">N</i>o consoles to display at this time.</div><div style="position:absolute;left:250px;top:611px;width:765px;height:1px;background:#808080"></div><div style="position:absolute;left:8px;top:738px;width:1px;height:18px;background:#FFFFFF"></div><div style="position:absolute;left:9px;top:738px;width:1px;height:18px;background:#808080"></div><svg style="position:absolute;left:19px;top:740px" width="16" height="16" viewBox="0 0 16 16" ><rect x="1.5" y="2.5" width="5" height="11" fill="#fff" stroke="#808080"/><rect x="2" y="3" width="4" height="3" fill="#5A7EC0"/><path d="M10 1 V7 M7 4 H13" stroke="#E8B820" stroke-width="1.5"/></svg><div style="position:absolute;left:769px;top:738px;width:1px;height:18px;background:#FFFFFF"></div><div style="position:absolute;left:770px;top:738px;width:1px;height:18px;background:#808080"></div></body></html>
